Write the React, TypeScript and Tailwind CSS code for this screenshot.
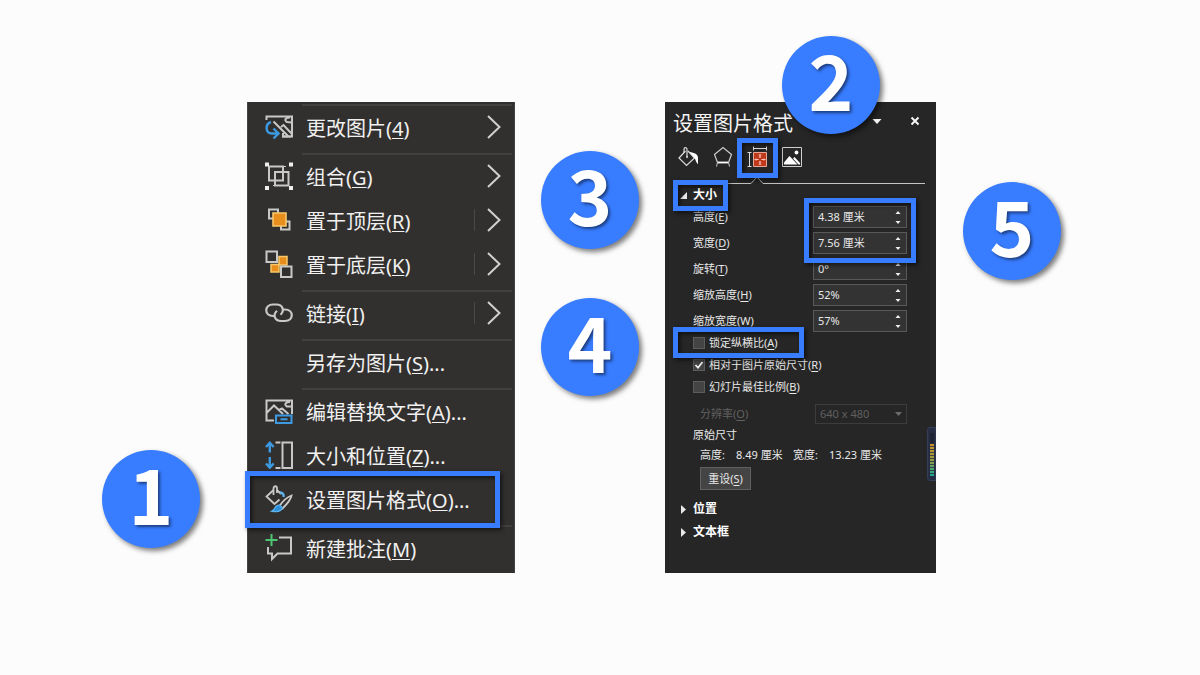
import type { ReactNode } from "react";

const LATIN_CJK = "font-['Noto_Sans','Noto_Sans_CJK_SC',sans-serif]";

function Badge({ n, className = "" }: { n: number; className?: string }) {
  return (
    <div
      className={`flex size-[98px] shrink-0 items-center justify-center rounded-full bg-[#387cff] pb-3.5 font-['Noto_Sans_CJK_SC',sans-serif] text-[76px] leading-none font-bold text-white shadow-[3px_3px_5px_rgba(0,0,0,0.5)] [text-shadow:2px_2px_3px_rgba(0,0,0,0.5)] ${className}`}
    >
      {n}
    </div>
  );
}

function Frame({ className }: { className: string }) {
  return (
    <span
      className={`pointer-events-none absolute z-10 border-[5px] border-[#387cff] drop-shadow-[2px_2px_2px_rgba(0,0,0,0.6)] ${className}`}
    />
  );
}

function Key({ text, k, tail = "" }: { text: string; k: string; tail?: string }) {
  return (
    <span className="whitespace-nowrap">
      {text}(<span className="underline decoration-1 underline-offset-2">{k}</span>){tail}
    </span>
  );
}

function MenuIcon({ children }: { children?: ReactNode }) {
  return (
    <svg width="28" height="28" viewBox="0 0 28 28" fill="none" stroke="#c8c8c8" strokeWidth="2" className="shrink-0">
      {children}
    </svg>
  );
}

const changePicture = (
  <MenuIcon>
    <path d="M1.500 7V3.500H27v20H17" />
    <path d="M8.500 8.500l14.500 14.500M16 14l2.500-2 8 8.500" />
    <path d="M18 20v3.500h8" />
    <path d="M25 4.500c-5 0-6 3-3 4.500l4.500.5" />
    <path d="M6 9C0 11 0 20.500 7 20.500h6" stroke="#3d9ae0" strokeWidth="2.400" />
    <path d="M8.500 15.500l5 5-5 5" stroke="#3d9ae0" strokeWidth="2.400" />
  </MenuIcon>
);
const groupIcon = (
  <MenuIcon>
    <path d="M4 4.500v14h14v-14zM10 10v13.500h13.500V10z" />
    <path d="M18 4.500h3M23.500 23.500H8" strokeWidth="1.200" />
    <path d="M0 .5h4v4H0zM24 .5h4v4h-4zM0 24h4v4H0zM24 24h4v4h-4z" fill="#eeeeee" stroke="none" />
  </MenuIcon>
);
const bringFront = (
  <MenuIcon>
    <path d="M8 12.500H4V3.500h9V7M20 15.500h4.500v8H16V20" />
    <path d="M8 7h13v13H8z" fill="#e88e1c" stroke="#f8c86a" strokeWidth="1.600" />
  </MenuIcon>
);
const sendBack = (
  <MenuIcon>
    <path d="M14 6.500h8V15h-8zM6 14.500h8V22H6z" fill="#e88e1c" stroke="#f8c86a" strokeWidth="1.500" />
    <path d="M1.500 1.500h10.500v10.500H1.500zM16 16.500h10.500V27H16z" fill="#31302f" />
  </MenuIcon>
);
const linkIcon = (
  <MenuIcon>
    <path
      d="M10 17H8C-1 17-1 5.500 8 5.500h3.500c6 0 8.500 6 4 10.200M18.500 10.500h1.500c9 0 9 11.500 0 11.500h-4c-6.500 0-8.500-6-4-10.200"
      strokeWidth="2.200"
    />
  </MenuIcon>
);
const altText = (
  <MenuIcon>
    <path d="M9 23.500H1.500V3.500H27V17M2 15.500l7-7 9 8.500M14 13l3-1.500 6.500 5.500M25 5c-5 0-6 3-3 4.500h5" />
    <path d="M11 18.500h15.500V26H11zM15.500 22.200h7" stroke="#3d9ae0" />
  </MenuIcon>
);
const sizeIcon = (
  <MenuIcon>
    <path d="M17.500 1.500H27v25.500h-9.500zM10.500 1.500h5M10.500 27h5" />
    <path d="M4.800 2v9.500M4.800 16v10.500M1 6l3.800-4.200L8.600 6M1 22.500l3.800 4.200 3.800-4.200" stroke="#3d9ae0" strokeWidth="2.400" />
  </MenuIcon>
);
const formatIcon = (
  <MenuIcon>
    <path d="M8.500 10V3.500c0-3 3.500-3 3.500 0V8M9 4.500l-7.500 7L9.500 19l5-4.500M11.500 4.500L16 9" strokeWidth="1.800" />
    <path d="M15 7.500c3 0 4 2 3.500 4.500" stroke="#5eb4ef" strokeWidth="2.400" />
    <path d="M26.500 10.500c-4 1.500-9 6-12 10.500l3 2.500c4-4 8.500-9.500 9-13z" strokeWidth="1.800" />
    <path d="M14.500 20c-5-.5-4 5-8 6.200 4 1 9.800.8 11-3.500z" fill="#2f8ed8" stroke="#5eb4ef" strokeWidth="1.200" />
  </MenuIcon>
);
const commentIcon = (
  <MenuIcon>
    <path d="M14 3.500h12v16H12.500L7 25v-5.500H3V13" />
    <path d="M6.500 0v12M.5 6h12" stroke="#4fc472" />
  </MenuIcon>
);

function MenuItem({
  icon,
  text,
  k,
  tail,
  sub,
  split,
  framed,
}: {
  icon?: ReactNode;
  text: string;
  k: string;
  tail?: string;
  sub?: boolean;
  split?: boolean;
  framed?: boolean;
}) {
  return (
    <li className="relative">
      <button type="button" className="flex h-11 w-full items-center pr-[13px] pl-[17px] text-left">
        <span className="mb-1 flex w-[41px] shrink-0">{icon}</span>
        <Key text={text} k={k} tail={tail} />
        {sub && (
          <span className="mb-1 ml-auto flex items-center gap-3">
            {split && <span className="h-[22px] w-px bg-[#4a4948]" />}
            <svg width="14" height="24" viewBox="0 0 14 24" fill="none" stroke="#d0d0d0" strokeWidth="2">
              <path d="M1 1l11.500 11L1 23" />
            </svg>
          </span>
        )}
      </button>
      {framed && <Frame className="-top-2 -left-[3px] h-[57px] w-[255px]" />}
    </li>
  );
}

function Divider() {
  return (
    <li role="separator" className="flex h-[5px] items-center pr-0.5 pl-[54px]">
      <span className="h-0.5 w-full bg-[#42403f]" />
    </li>
  );
}

function ContextMenu() {
  return (
    <ul className="w-[268px] shrink-0 border-x border-[#444342] bg-[#31302f] pb-px text-[20px] leading-7 text-[#f1f1f1]">
      <Divider />
      <MenuItem icon={changePicture} text="更改图片" k="4" sub />
      <Divider />
      <MenuItem icon={groupIcon} text="组合" k="G" sub />
      <MenuItem icon={bringFront} text="置于顶层" k="R" sub split />
      <MenuItem icon={sendBack} text="置于底层" k="K" sub split />
      <Divider />
      <MenuItem icon={linkIcon} text="链接" k="I" sub split />
      <Divider />
      <MenuItem text="另存为图片" k="S" tail="..." />
      <Divider />
      <MenuItem icon={altText} text="编辑替换文字" k="A" tail="..." />
      <MenuItem icon={sizeIcon} text="大小和位置" k="Z" tail="..." />
      <MenuItem icon={formatIcon} text="设置图片格式" k="O" tail="..." framed />
      <Divider />
      <MenuItem icon={commentIcon} text="新建批注" k="M" />
    </ul>
  );
}

function SpinField({ id, text, k, value }: { id: string; text: string; k: string; value: string }) {
  return (
    <div className="flex items-center justify-between">
      <label htmlFor={id}>
        <Key text={text} k={k} />
      </label>
      <div className="flex h-[22px] w-[94px] border border-[#595959] bg-[#333333]">
        <input id={id} type="text" defaultValue={value} className="w-0 flex-1 bg-transparent pl-1 outline-none" />
        <span className="flex w-4 flex-col">
          <button type="button" aria-label="增加" className="flex flex-1 items-center justify-center">
            <svg width="6" height="3" viewBox="0 0 6 3" fill="#f0f0f0">
              <path d="M3 0l2.500 3h-5z" />
            </svg>
          </button>
          <button type="button" aria-label="减少" className="flex flex-1 items-center justify-center">
            <svg width="6" height="3" viewBox="0 0 6 3" fill="#f0f0f0">
              <path d="M3 3L.5 0h5z" />
            </svg>
          </button>
        </span>
      </div>
    </div>
  );
}

function Check({ text, k, checked, framed }: { text: string; k: string; checked?: boolean; framed?: boolean }) {
  return (
    <div className="relative">
      <label className="flex h-[22px] items-center gap-1">
        <span className="grid size-3">
          <input
            type="checkbox"
            defaultChecked={checked}
            className="peer col-start-1 row-start-1 size-3 appearance-none border border-[#5c5c5c] bg-[#444444]"
          />
          <svg
            viewBox="0 0 12 12"
            fill="none"
            stroke="#f4f4f4"
            strokeWidth="1.600"
            className="pointer-events-none invisible col-start-1 row-start-1 size-3 peer-checked:visible"
          >
            <path d="M2.500 6l2.500 2.800L9.500 3" />
          </svg>
        </span>
        <Key text={text} k={k} />
      </label>
      {framed && <Frame className="-top-[5px] -left-5 h-[31px] w-[131px]" />}
    </div>
  );
}

function SectionHead({ title, open }: { title: string; open?: boolean }) {
  return (
    <button type="button" className="flex h-[22px] items-center gap-1.5 pl-[15px] text-[12px] font-bold text-white">
      <svg width="7" height="9" viewBox="0 0 7 9" fill="#e8e8e8">
        <path d={open ? "M7 1v7H0z" : "M1 0l5 4.500L1 9z"} />
      </svg>
      {title}
    </button>
  );
}

function FormatPane() {
  return (
    <section className="relative flex min-h-[471px] w-[271px] shrink-0 flex-col bg-[#262626] text-[11px] leading-4 text-[#e8e8e8]">
      <header className="flex h-11 items-center pr-4 pl-2">
        <h2 className="text-[20px] leading-7 text-[#f4f4f4]">设置图片格式</h2>
        <button type="button" aria-label="选项" className="mb-1.5 ml-auto">
          <svg width="10" height="5" viewBox="0 0 10 5" fill="#f4f4f4">
            <path d="M.5 0h9L5 5z" />
          </svg>
        </button>
        <button type="button" aria-label="关闭" className="mb-1.5 ml-7">
          <svg width="10" height="10" viewBox="0 0 10 10" fill="none" stroke="#f4f4f4" strokeWidth="2">
            <path d="M1.500 1.500l7 7M8.500 1.500l-7 7" />
          </svg>
        </button>
      </header>

      <nav className="flex h-7 items-start gap-3.5 pl-[13px]">
        <button type="button" aria-label="填充与线条">
          <svg width="21" height="22" viewBox="0 0 21 22" fill="none" stroke="#dcdcdc" strokeWidth="1.200">
            <path d="M7.500 5L1 12l7.500 7.500 8-7.500L10 5" />
            <path d="M9 11V3.500c0-2.500-3-2.500-3 0V7" />
            <circle cx="9" cy="11" r="1" fill="#dcdcdc" stroke="none" />
            <path d="M11.500 6c5 .5 8.500 2.500 8.500 5.500V18c-2-1-2-4.500-4-6.500z" fill="#ffffff" stroke="none" />
          </svg>
        </button>
        <button type="button" aria-label="效果">
          <svg width="20" height="22" viewBox="0 0 20 22" fill="none" stroke="#cccccc" strokeWidth="1.200">
            <path d="M4.500 16.500L1.500 8.500 10 1.500l8.500 7-3 8" />
            <path d="M4.500 16.500h11" stroke="#ffffff" strokeWidth="1.800" />
            <path d="M4.500 16.500L3.500 20.500M15.500 16.500l1 4" strokeWidth="1" />
          </svg>
        </button>
        <button type="button" aria-label="大小与属性" className="relative">
          <svg width="21" height="22" viewBox="0 0 21 22" fill="none" stroke="#dcdcdc">
            <path d="M6.500 2.500h13M6.500 .5v4M19.500 .5v4M2.500 6.500v14M.5 6.500h4M.5 20.500h4" />
            <path d="M6.500 6.500h13v14h-13z" fill="#c0381a" stroke="#e6a898" />
            <path d="M13 8v4M13 15v4M7.500 13.500h4M14.500 13.500h4" stroke="#ffd9cf" strokeWidth="1.200" />
            <path d="M11.500 9h3M11.500 18h3M9 12v3M17 12v3" stroke="#e88f78" strokeWidth="0.800" />
          </svg>
          <Frame className="-top-2 -left-[10px] h-10 w-[41px]" />
        </button>
        <button type="button" aria-label="图片">
          <svg width="20" height="22" viewBox="0 0 20 22" fill="none" stroke="#cfcfcf">
            <path d="M.5 1.500h19v19H.5z" />
            <g fill="#ffffff" stroke="none">
              <circle cx="14.500" cy="6.500" r="1.900" />
              <path d="M2 18.500v-2L7.500 10l8 8.500zM11 12.500l1.500-1.500 5.500 6v1.500h-1.500z" />
            </g>
          </svg>
        </button>
      </nav>

      <div className="flex h-[10px] items-end pr-[11px] pl-2.5">
        <span className="h-px w-[75px] bg-[#c4c4c4]" />
        <svg width="14" height="8" viewBox="0 0 14 8" fill="none" stroke="#c4c4c4">
          <path d="M0 7.500h1L7 1l6 6.500h1" />
        </svg>
        <span className="h-px flex-1 bg-[#c4c4c4]" />
      </div>

      <div className="relative flex">
        <SectionHead title="大小" open />
        <Frame className="-top-1 left-2 h-[31px] w-[55px]" />
      </div>

      <div className="relative flex flex-col gap-1 pr-[29px] pl-7">
        <SpinField id="height" text="高度" k="E" value="4.38 厘米" />
        <SpinField id="width" text="宽度" k="D" value="7.56 厘米" />
        <SpinField id="rotation" text="旋转" k="T" value="0°" />
        <SpinField id="scale-height" text="缩放高度" k="H" value="52%" />
        <SpinField id="scale-width" text="缩放宽度" k="W" value="57%" />
        <Frame className="-top-2 right-5 h-[65px] w-[112px]" />
      </div>

      <div className="flex flex-col pl-7">
        <Check text="锁定纵横比" k="A" framed />
        <Check text="相对于图片原始尺寸" k="R" checked />
        <Check text="幻灯片最佳比例" k="B" />
      </div>

      <div className="mt-1.5 flex items-center justify-between pr-[29px] pl-[35px] text-[#606060]">
        <label htmlFor="resolution">
          <Key text="分辨率" k="O" />
        </label>
        <div className="grid h-5 w-[92px] items-center border border-[#3c3c3c]">
          <select id="resolution" disabled className="col-start-1 row-start-1 h-[18px] w-full appearance-none bg-transparent pl-1 opacity-100">
            <option>640 x 480</option>
          </select>
          <svg width="7" height="4" viewBox="0 0 7 4" fill="#6c6c6c" className="pointer-events-none col-start-1 row-start-1 mr-1 justify-self-end">
            <path d="M0 0h7L3.500 4z" />
          </svg>
        </div>
      </div>

      <p className="mt-[3px] pl-7">原始尺寸</p>
      <dl className="mt-1 flex pl-[35px]">
        <dt className="w-9">高度:</dt>
        <dd className="w-[57px]">8.49 厘米</dd>
        <dt className="w-9">宽度:</dt>
        <dd>13.23 厘米</dd>
      </dl>
      <button type="button" className="mt-1 ml-[35px] h-[23px] w-[51px] border border-[#606060] bg-[#444444]">
        <Key text="重设" k="S" />
      </button>

      <div className="mt-2 flex flex-col items-start gap-px">
        <SectionHead title="位置" />
        <SectionHead title="文本框" />
      </div>

      <svg width="9" height="54" viewBox="0 0 9 54" className="absolute top-[325px] right-0">
        <defs>
          <linearGradient id="level" x1="0" y1="0" x2="0" y2="1">
            <stop offset="0" stopColor="#c98f2b" />
            <stop offset="0.500" stopColor="#949d42" />
            <stop offset="1" stopColor="#18a892" />
          </linearGradient>
        </defs>
        <path d="M9 .5H3Q.5.500.5 3v48q0 2.500 2.500 2.500h6z" fill="#272d42" stroke="#363d55" />
        <path d="M3 6h4v10H3z" fill="#1f2435" />
        <path d="M3 17h4v32H3z" fill="url(#level)" />
        <path
          d="M3 19.500h4M3 22.500h4M3 25.500h4M3 28.500h4M3 31.500h4M3 34.500h4M3 37.500h4M3 40.500h4M3 43.500h4M3 46.500h4"
          stroke="#272d42"
          strokeWidth="0.800"
        />
      </svg>

      <Badge n={2} className="absolute! -top-[66px] left-[117px] z-20" />
    </section>
  );
}

export default function App() {
  return (
    <main className={`flex min-h-screen items-start justify-center bg-[#fcfcfc] pt-[102px] pr-[37px] ${LATIN_CJK}`}>
      <Badge n={1} className="mt-[348px] mr-[47px]" />
      <ContextMenu />
      <div className="mx-[26px] mt-[49px] flex flex-col gap-[49px]">
        <Badge n={3} />
        <Badge n={4} />
      </div>
      <FormatPane />
      <Badge n={5} className="mt-20 ml-[27px]" />
    </main>
  );
}
